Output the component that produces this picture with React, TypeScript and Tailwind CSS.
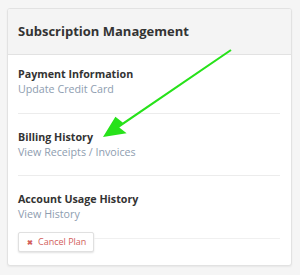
export default function App() {
  return (
    <div className="relative w-[300px] h-[275px] bg-[#f5f5f5] pt-[8px] pl-[7px] font-['Open_Sans',sans-serif]">
      <div className="w-[285px] rounded-[3px] border border-[#e2e2e2] bg-white shadow-[0_1px_2px_rgba(0,0,0,0.06)] overflow-hidden">
        <div className="h-[46px] flex items-center px-[10px] bg-[#f4f4f4] border-b border-[#e2e2e2]">
          <h2 className="text-[13px] font-bold text-[#333]">Subscription Management</h2>
        </div>
        <div className="pl-[10px] pr-[11px] pt-[12px] pb-[13px]">
          <div className="pb-[16px] border-b border-[#ececec]">
            <div className="text-[10.7px] leading-[15px] font-bold text-[#333]">Payment Information</div>
            <div className="text-[10.7px] leading-[15px] text-[#8e9db0]">Update Credit Card</div>
          </div>
          <div className="pt-[16px] pb-[15px] border-b border-[#ececec]">
            <div className="text-[10.7px] leading-[15px] font-bold text-[#333]">Billing History</div>
            <div className="text-[10.7px] leading-[15px] text-[#8e9db0]">View Receipts / Invoices</div>
          </div>
          <div className="pt-[16px]">
            <div className="text-[10.7px] leading-[15px] font-bold text-[#333]">Account Usage History</div>
            <div className="text-[10.7px] leading-[15px] text-[#8e9db0]">View History</div>
          </div>
          <div className="flex items-start mt-[10px]">
            <button className="h-[20px] pl-[8px] pr-[7px] flex items-center gap-[5px] rounded-[2px] border border-[#e0e0e0] bg-white shadow-[0_1px_2px_rgba(0,0,0,0.12)] text-[9px] text-[#d2605c]">
              <span className="text-[7px] font-bold leading-none">✖</span>
              Cancel Plan
            </button>
            <div className="flex-1 mt-[6px] border-t border-[#f0f0f0]" />
          </div>
        </div>
      </div>
      <svg className="absolute left-0 top-0" width="300" height="275" viewBox="0 0 300 275">
        <polygon
          fill="#27e21a"
          points="231.6,50.8 230.4,49.2 122.7,122.5 115.4,116.7 103,137 126.6,133.3 119.3,127.5"
        />
      </svg>
    </div>
  );
}
